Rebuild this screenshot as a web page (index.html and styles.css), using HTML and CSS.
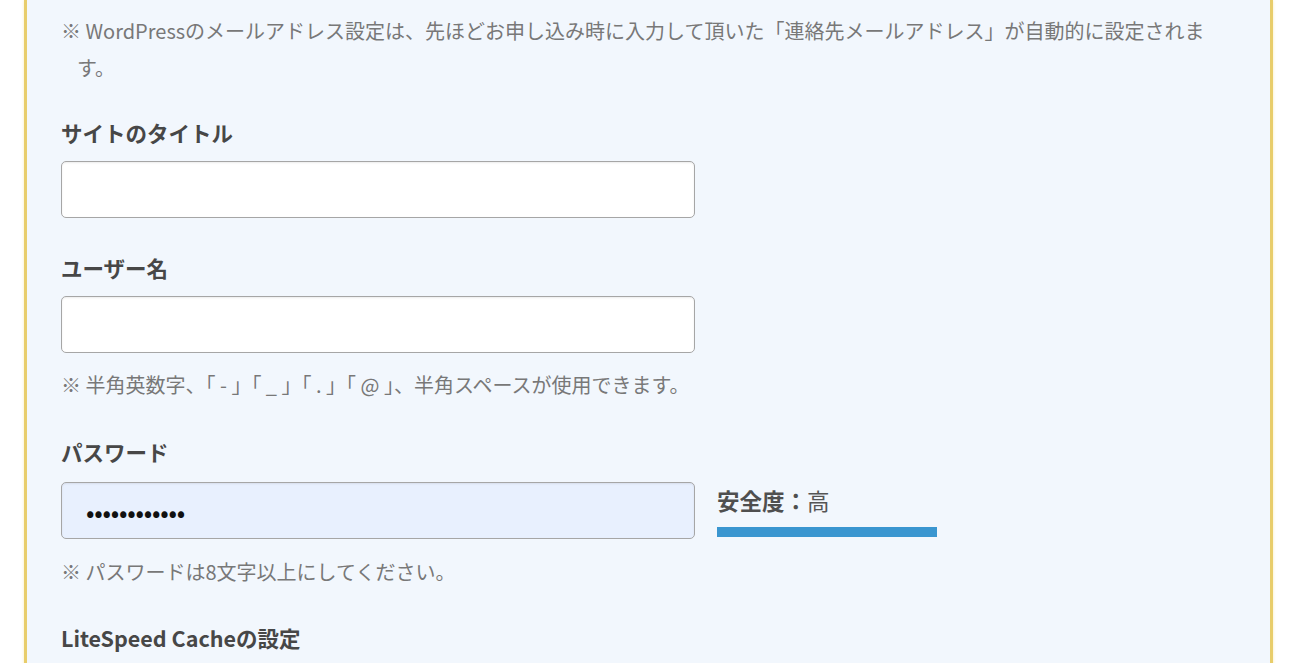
FILE: index.html
```html
<!DOCTYPE html>
<html lang="ja">
<head>
<meta charset="utf-8">
<title>WordPress設定</title>
<link rel="stylesheet" href="styles.css">
</head>
<body>
<div class="panel">
  <p class="note note-top">※ WordPressのメールアドレス設定は、先ほどお申し込み時に入力して頂いた「連絡先メールアドレス」が自動的に設定されます。</p>

  <div class="group group-first">
    <div class="label">サイトのタイトル</div>
    <input class="field" type="text">
  </div>

  <div class="group">
    <div class="label">ユーザー名</div>
    <input class="field" type="text">
    <p class="note">※ 半角英数字、「 - 」「 _ 」「 . 」「 @ 」、半角スペースが使用できます。</p>
  </div>

  <div class="group group-pw">
    <div class="label label-pw">パスワード</div>
    <div class="pw-row">
      <input class="field field-pw" type="password" value="abcdefghijkl">
      <div class="strength">
        <div class="strength-text"><b>安全度：</b>高</div>
        <div class="strength-bar"></div>
      </div>
    </div>
    <p class="note note-pw">※ パスワードは8文字以上にしてください。</p>
  </div>

  <div class="group group-last">
    <div class="label">LiteSpeed Cacheの設定</div>
  </div>
</div>
</body>
</html>
```

FILE: styles.css
```css
html, body {
  margin: 0;
  padding: 0;
  background: #ffffff;
  overflow: hidden;
  height: 663px;
}

body {
  font-family: "Noto Sans CJK JP", "Noto Sans", sans-serif;
}

.panel {
  box-sizing: border-box;
  width: 1249px;
  height: 900px;
  margin-left: 24px;
  padding: 12px 34px 0 34px;
  background: #f2f7fd;
  border-left: 3px solid #e8cd6b;
  border-right: 3px solid #e8cd6b;
  box-shadow: 0 0 3px rgba(245, 215, 100, 0.45);
}

.note {
  margin: 0;
  padding-left: 16px;
  text-indent: -16px;
  font-size: 20px;
  line-height: 37px;
  color: #787878;
  margin-top: 13px;
}

.note-top {
  margin-top: 0;
}

.note-pw {
  margin-top: 14px;
}

.group {
  margin-top: 35px;
}

.group-first {
  margin-top: 32px;
}

.group-pw {
  margin-top: 34px;
}

.group-last {
  margin-top: 33px;
}

.label {
  font-size: 21.5px;
  font-weight: bold;
  line-height: 30px;
  color: #474747;
  margin-bottom: 13px;
}

.label-pw {
  margin-bottom: 15px;
}

.field {
  display: block;
  box-sizing: border-box;
  width: 634px;
  height: 57px;
  margin: 0;
  padding: 0 24px;
  border: 1px solid #a6a6a6;
  border-radius: 5px;
  background: #ffffff;
  box-shadow: inset 0 1px 2px rgba(0, 0, 0, 0.08);
  font-family: "Noto Sans CJK JP", "Noto Sans", sans-serif;
  font-size: 16px;
  color: #111;
  outline: none;
}

.field-pw {
  background: #e8f0fe;
  font-size: 25px;
  letter-spacing: -0.25px;
}

.pw-row {
  display: flex;
  align-items: flex-start;
  gap: 22px;
}

.strength {
  padding-top: 3px;
}

.strength-text {
  font-size: 22.5px;
  line-height: 30px;
  color: #555;
}

.strength-text b {
  font-weight: bold;
  color: #4f4f4f;
}

.strength-bar {
  width: 220px;
  height: 10px;
  margin-top: 12px;
  background: #3a96d0;
}
```
